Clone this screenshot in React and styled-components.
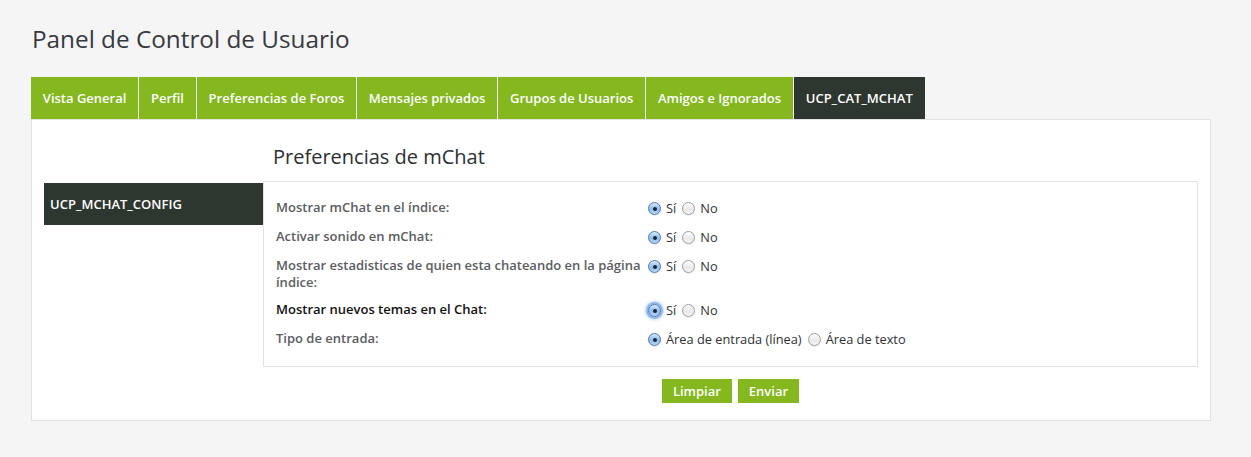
import React from "react";
import styled, { createGlobalStyle } from "styled-components";

const Global = createGlobalStyle`
  html, body { margin: 0; padding: 0; background: #f5f5f5; }
  body { font-family: "Open Sans", "Noto Sans", sans-serif; }
  * { box-sizing: border-box; }
`;

const Page = styled.div`
  padding: 0 40px 0 31px;
`;

const Title = styled.h1`
  margin: 0;
  padding-top: 22px;
  font-size: 24.3px;
  line-height: 33px;
  font-weight: 400;
  color: #363a40;
  padding-left: 1px;
`;

const Tabs = styled.ul`
  list-style: none;
  margin: 22px 0 0;
  padding: 0;
  display: flex;
  gap: 1px;
`;

const Tab = styled.li`
  height: 42px;
  display: flex;
  align-items: center;
  padding: 0 11.8px;
  font-size: 13px;
  font-weight: 600;
  color: #fff;
  background: ${(p) => (p.$active ? "#2e372f" : "#84b81e")};
`;

const Panel = styled.div`
  background: #fff;
  border: 1px solid #e2e2e2;
  display: grid;
  grid-template-columns: 219px 1fr;
  padding: 0 12px 17px 12px;
`;

const Side = styled.div`
  padding-top: 63px;
`;

const SideItem = styled.div`
  height: 42px;
  background: #2e372f;
  color: #fff;
  font-size: 13px;
  font-weight: 600;
  display: flex;
  align-items: center;
  padding-left: 6px;
`;

const Main = styled.div`
  display: flex;
  flex-direction: column;
`;

const Heading = styled.h2`
  margin: 23px 0 10px;
  padding-left: 10px;
  font-size: 20px;
  line-height: 28px;
  font-weight: 400;
  color: #2b2f33;
`;

const Box = styled.div`
  border: 1px solid #e2e2e2;
  padding: 12px;
`;

const Row = styled.div`
  display: flex;
  align-items: flex-start;
  padding: 5px 0;
`;

const Label = styled.div`
  width: 372px;
  flex: none;
  font-size: 13px;
  font-weight: 600;
  line-height: 17px;
  color: ${(p) => (p.$hover ? "#111" : "#5a5d61")};
  padding-right: 6px;
`;

const Options = styled.div`
  display: flex;
  align-items: center;
  line-height: 19px;
  font-size: 12.8px;
  color: #2f3235;
`;

const Option = styled.label`
  display: flex;
  align-items: center;
  gap: 5px;
  margin-right: 6px;
`;

const Radio = styled.span`
  width: 13px;
  height: 13px;
  border-radius: 50%;
  flex: none;
  position: relative;
  border: 1px solid ${(p) => (p.$checked ? "#4f78ad" : "#9d9d9d")};
  background: ${(p) =>
    p.$checked
      ? "linear-gradient(#d7e8fb, #8ebcf0 55%, #b6d6fa)"
      : "linear-gradient(#ffffff, #e9e9e9 60%, #f6f6f6)"};
  box-shadow: ${(p) =>
    p.$focus
      ? "0 0 0 2px rgba(95,150,225,0.55), 0 0 3px 3px rgba(120,170,235,0.45)"
      : "0 1px 1px rgba(0,0,0,0.08)"};
  &::after {
    content: "";
    display: ${(p) => (p.$checked ? "block" : "none")};
    position: absolute;
    width: 4px;
    height: 4px;
    border-radius: 50%;
    background: #1c2633;
    left: 3.5px;
    top: 3.5px;
  }
`;

const Buttons = styled.div`
  display: flex;
  justify-content: center;
  gap: 6px;
  margin-top: 12px;
`;

const Button = styled.button`
  height: 24px;
  padding: 0 11px;
  border: none;
  background: #84b81e;
  color: #fff;
  font-family: "Open Sans", "Noto Sans", sans-serif;
  font-size: 13px;
  font-weight: 600;
  cursor: pointer;
`;

const tabs = [
  "Vista General",
  "Perfil",
  "Preferencias de Foros",
  "Mensajes privados",
  "Grupos de Usuarios",
  "Amigos e Ignorados",
  "UCP_CAT_MCHAT",
];

const rows = [
  { label: "Mostrar mChat en el índice:", opts: ["Sí", "No"] },
  { label: "Activar sonido en mChat:", opts: ["Sí", "No"] },
  { label: "Mostrar estadisticas de quien esta chateando en la página índice:", opts: ["Sí", "No"] },
  { label: "Mostrar nuevos temas en el Chat:", opts: ["Sí", "No"], hover: true },
  { label: "Tipo de entrada:", opts: ["Área de entrada (línea)", "Área de texto"] },
];

export default function App() {
  return (
    <Page>
      <Global />
      <Title>Panel de Control de Usuario</Title>
      <Tabs>
        {tabs.map((t, i) => (
          <Tab key={t} $active={i === tabs.length - 1}>
            {t}
          </Tab>
        ))}
      </Tabs>
      <Panel>
        <Side>
          <SideItem>UCP_MCHAT_CONFIG</SideItem>
        </Side>
        <Main>
          <Heading>Preferencias de mChat</Heading>
          <Box>
            {rows.map((r) => (
              <Row key={r.label}>
                <Label $hover={r.hover}>{r.label}</Label>
                <Options>
                  {r.opts.map((o, j) => (
                    <Option key={o}>
                      <Radio $checked={j === 0} $focus={r.hover && j === 0} />
                      {o}
                    </Option>
                  ))}
                </Options>
              </Row>
            ))}
          </Box>
          <Buttons>
            <Button>Limpiar</Button>
            <Button>Enviar</Button>
          </Buttons>
        </Main>
      </Panel>
    </Page>
  );
}
